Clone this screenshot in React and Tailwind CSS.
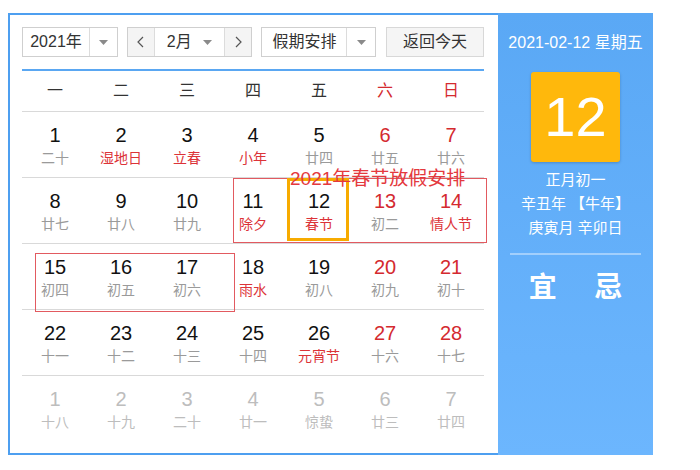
import React from 'react';

const FONT = { fontFamily: '"Liberation Sans", "Noto Sans CJK SC", sans-serif' };

const weekdays = ['一', '二', '三', '四', '五', '六', '日'];

// n: day, l: lunar text, hl: lunar text is a festival (red), wk: weekend number (red), o: other month
const rows = [
  [
    { n: 1, l: '二十' },
    { n: 2, l: '湿地日', hl: true },
    { n: 3, l: '立春', hl: true },
    { n: 4, l: '小年', hl: true },
    { n: 5, l: '廿四' },
    { n: 6, l: '廿五', wk: true },
    { n: 7, l: '廿六', wk: true },
  ],
  [
    { n: 8, l: '廿七' },
    { n: 9, l: '廿八' },
    { n: 10, l: '廿九' },
    { n: 11, l: '除夕', hl: true },
    { n: 12, l: '春节', hl: true },
    { n: 13, l: '初二', wk: true },
    { n: 14, l: '情人节', wk: true, hl: true },
  ],
  [
    { n: 15, l: '初四' },
    { n: 16, l: '初五' },
    { n: 17, l: '初六' },
    { n: 18, l: '雨水', hl: true },
    { n: 19, l: '初八' },
    { n: 20, l: '初九', wk: true },
    { n: 21, l: '初十', wk: true },
  ],
  [
    { n: 22, l: '十一' },
    { n: 23, l: '十二' },
    { n: 24, l: '十三' },
    { n: 25, l: '十四' },
    { n: 26, l: '元宵节', hl: true },
    { n: 27, l: '十六', wk: true },
    { n: 28, l: '十七', wk: true },
  ],
  [
    { n: 1, l: '十八', o: true },
    { n: 2, l: '十九', o: true },
    { n: 3, l: '二十', o: true },
    { n: 4, l: '廿一', o: true },
    { n: 5, l: '惊蛰', o: true },
    { n: 6, l: '廿三', o: true },
    { n: 7, l: '廿四', o: true },
  ],
];

function Caret() {
  return (
    <svg width="9" height="5" viewBox="0 0 9 5">
      <path d="M0 0h9L4.5 5z" fill="#8a8a8a" />
    </svg>
  );
}

function Chevron({ dir }) {
  return (
    <svg width="7" height="12" viewBox="0 0 7 12">
      <path
        d={dir === 'left' ? 'M6 1L1 6l5 5' : 'M1 1l5 5-5 5'}
        fill="none"
        stroke="#555"
        strokeWidth="1.2"
      />
    </svg>
  );
}

function DayCell({ d }) {
  let num = 'text-[#111]';
  let lunar = 'text-[#9a9a9a]';
  if (d.wk) num = 'text-[#d42a2f]';
  if (d.hl) lunar = 'text-[#dc3338]';
  if (d.o) {
    num = 'text-[#bdbdbd]';
    lunar = 'text-[#bdbdbd]';
  }
  return (
    <div className="flex flex-col items-center pt-[11px]">
      <div className={`text-[20px] leading-[24px] ${num}`}>{d.n}</div>
      <div className={`text-[14px] leading-[22px] ${lunar}`}>{d.l}</div>
    </div>
  );
}

export default function App() {
  return (
    <div className="ml-2 mt-[13px] flex w-[645px] bg-white" style={FONT}>
      {/* left: calendar */}
      <div className="w-[490px] border-y-2 border-l-2 border-[#4d9ff0] pl-3 pr-[14px] pt-3 pb-[11px]">
        <div className="flex h-[30px] text-[16px] text-[#333]">
          <div className="flex w-[96px] border border-[#cfcfcf] bg-white">
            <div className="flex w-[66px] items-center justify-center">2021年</div>
            <div className="flex flex-1 items-center justify-center border-l border-[#dcdcdc]">
              <Caret />
            </div>
          </div>
          <div className="ml-[9px] flex w-[126px] border border-[#cfcfcf]">
            <div className="flex w-[26px] items-center justify-center bg-[#f4f4f4]">
              <Chevron dir="left" />
            </div>
            <div className="flex flex-1 items-center border-x border-[#dcdcdc] bg-white pl-3">
              <span>2月</span>
              <span className="ml-auto mr-[12px] flex">
                <Caret />
              </span>
            </div>
            <div className="flex w-[26px] items-center justify-center bg-[#f4f4f4]">
              <Chevron dir="right" />
            </div>
          </div>
          <div className="ml-[9px] flex w-[115px] border border-[#cfcfcf] bg-white">
            <div className="flex w-[84px] items-center justify-center">假期安排</div>
            <div className="flex flex-1 items-center justify-center border-l border-[#dcdcdc]">
              <Caret />
            </div>
          </div>
          <button className="ml-[10px] flex w-[98px] items-center justify-center border border-[#d8d8d8] bg-[#f5f5f5]">
            返回今天
          </button>
        </div>

        <div className="mt-3 h-[2px] bg-[#5aa7f2]" />

        <div className="grid h-[41px] grid-cols-7 border-b border-[#d9d9d9] text-[16px]">
          {weekdays.map((w, i) => (
            <div
              key={w}
              className={`flex items-center justify-center ${i > 4 ? 'text-[#d42a2f]' : 'text-[#333]'}`}
            >
              {w}
            </div>
          ))}
        </div>

        <div className="relative">
          {rows.map((r, ri) => (
            <div
              key={ri}
              className={`grid h-[66px] grid-cols-7 ${ri < rows.length - 1 ? 'border-b border-[#d9d9d9]' : ''}`}
            >
              {r.map((d, di) => (
                <DayCell key={di} d={d} />
              ))}
            </div>
          ))}

          {/* holiday overlays */}
          <div className="absolute left-[211px] top-[66px] h-[65px] w-[254px] border border-[#e25a60]" />
          <div className="absolute left-[13px] top-[141px] h-[59px] w-[200px] border border-[#e25a60]" />
          <div className="absolute left-[265px] top-[66px] h-[63px] w-[62px] border-[3px] border-[#f7ab00]" />
          <div className="absolute left-[268px] top-[56px] whitespace-nowrap text-[19px] leading-[22px] text-[#e4393e]">
            2021年春节放假安排
          </div>
        </div>
      </div>

      {/* right: today panel */}
      <div className="flex w-[155px] flex-col items-center bg-gradient-to-b from-[#5aa8f5] to-[#6cb6fe] px-3 pt-[18px] text-white">
        <div className="whitespace-nowrap text-[16px] leading-[24px]">2021-02-12 星期五</div>
        <div className="mt-[17px] flex h-[90px] w-[89px] items-center justify-center rounded-[3px] bg-[#ffb80c] text-[56px] leading-none shadow-[0_1px_3px_rgba(0,0,0,0.2)]">
          12
        </div>
        <div className="mt-[6px] text-[15px] leading-[24px]">正月初一</div>
        <div className="whitespace-nowrap text-[15px] leading-[24px]">辛丑年 【牛年】</div>
        <div className="whitespace-nowrap text-[15px] leading-[24px]">庚寅月 辛卯日</div>
        <div className="mt-[13px] h-[2px] w-full bg-white/40" />
        <div className="mt-[15px] grid w-full grid-cols-2 text-[28px] font-bold leading-[36px]">
          <div className="text-center">宜</div>
          <div className="text-center">忌</div>
        </div>
      </div>
    </div>
  );
}
